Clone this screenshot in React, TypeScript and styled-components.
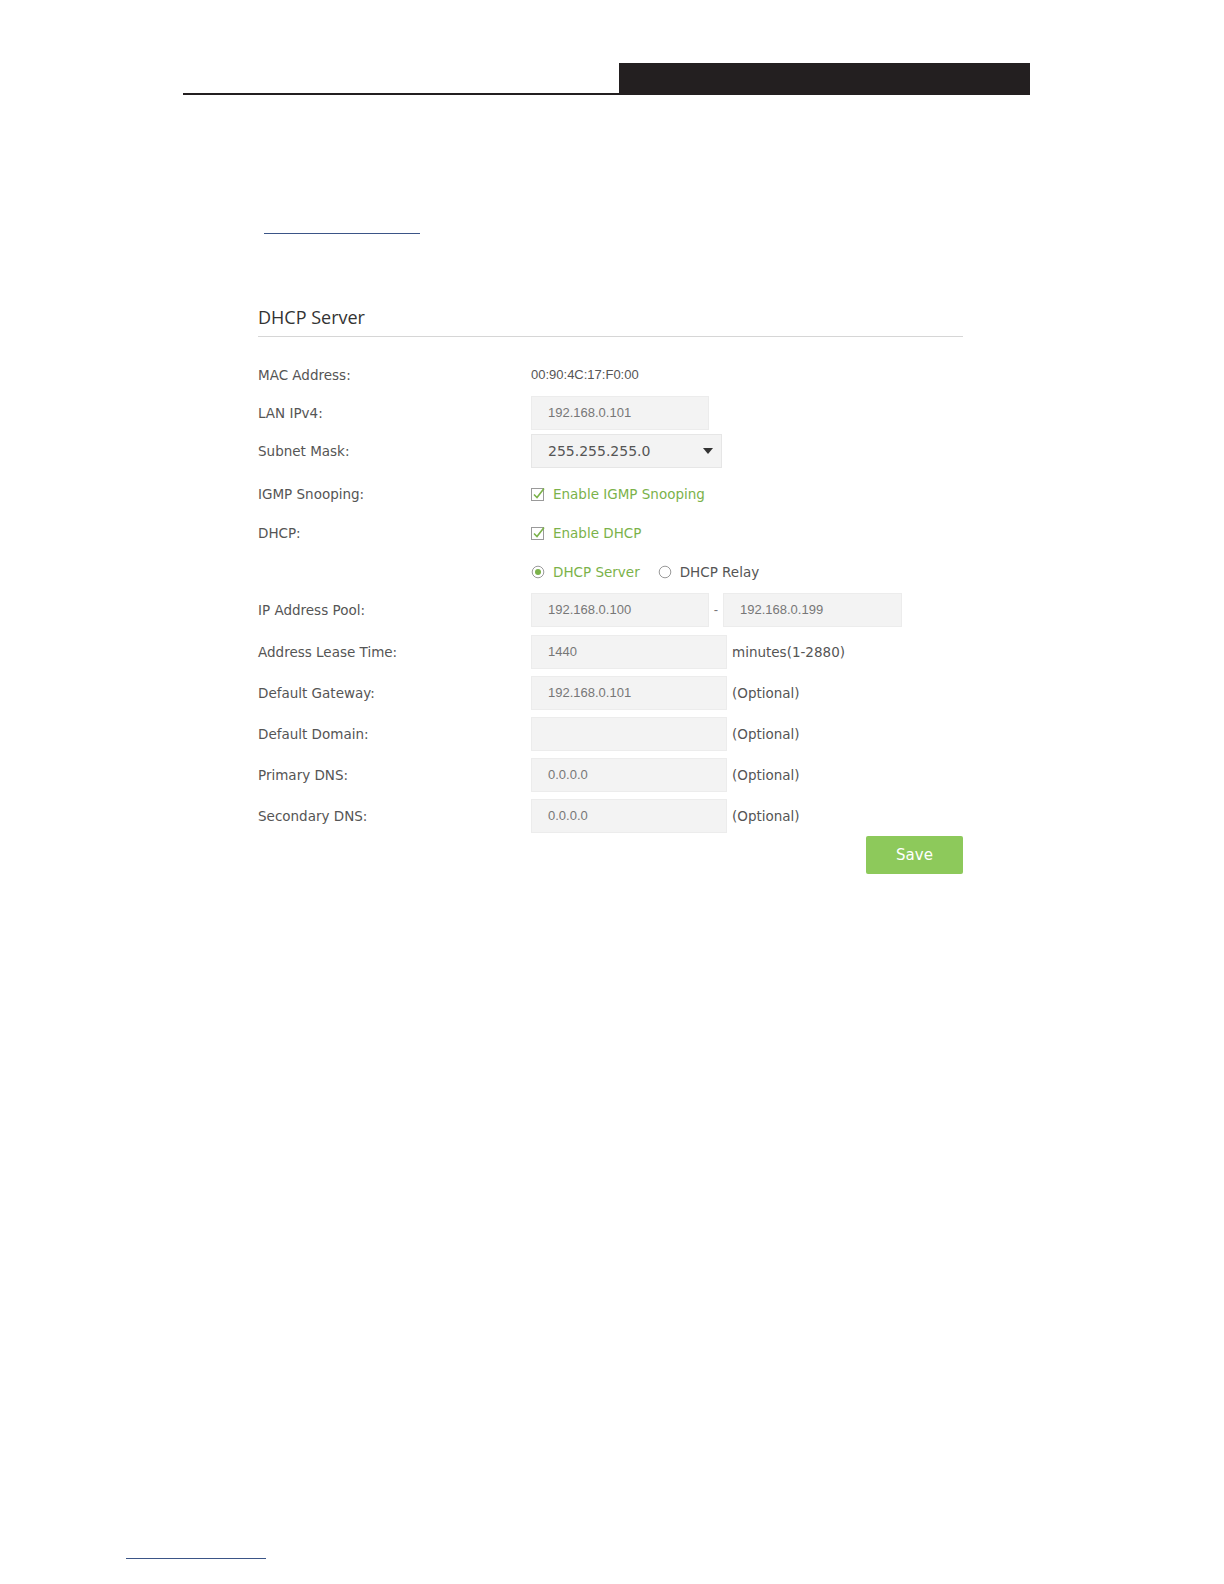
import React from "react";
import styled, { createGlobalStyle } from "styled-components";

const Global = createGlobalStyle`
  html, body { margin: 0; padding: 0; background: #ffffff; overflow: hidden; }
  body { font-family: "DejaVu Sans", Verdana, sans-serif; }
`;

const Page = styled.div`
  position: relative;
  width: 1224px;
  height: 1584px;
  background: #fff;
  overflow: hidden;
`;

const Header = styled.div`
  display: flex;
  align-items: flex-end;
  margin: 63px 0 0 183px;
  width: 847px;
`;

const HeaderRule = styled.div`
  width: 436px;
  border-bottom: 2.5px solid #231f20;
`;

const HeaderBlock = styled.div`
  width: 411px;
  height: 31.5px;
  background: #231f20;
`;

const LinkLine = styled.div`
  margin: 138px 0 0 264px;
  width: 156px;
  border-bottom: 1.5px solid #3b5587;
`;

const Panel = styled.section`
  margin: 70px 0 0 258px;
  width: 705px;
`;

const Title = styled.h2`
  margin: 0;
  font-family: "Open Sans", "DejaVu Sans", sans-serif;
  font-weight: 400;
  font-size: 18px;
  line-height: 26px;
  color: #333;
  padding-bottom: 6px;
  border-bottom: 1px solid #d6d6d6;
`;

const Form = styled.div`
  display: flex;
  flex-direction: column;
  margin-top: 21px;
`;

const Row = styled.div<{ $mt: number; $h?: number }>`
  display: grid;
  grid-template-columns: 273px 1fr;
  align-items: center;
  height: ${(p) => p.$h ?? 34}px;
  margin-top: ${(p) => p.$mt}px;
`;

const Label = styled.div`
  font-size: 13.5px;
  color: #555;
`;

const Field = styled.div`
  display: flex;
  align-items: center;
  height: 100%;
`;

const Plain = styled.span`
  font-family: "Liberation Sans", Arial, sans-serif;
  font-size: 13px;
  color: #555;
`;

const Input = styled.div<{ $w: number }>`
  box-sizing: border-box;
  width: ${(p) => p.$w}px;
  height: 34px;
  background: #f3f3f3;
  border: 1px solid #ececec;
  padding-left: 16px;
  display: flex;
  align-items: center;
  font-family: "Liberation Sans", Arial, sans-serif;
  font-size: 13px;
  color: #777;
`;

const Select = styled.div`
  box-sizing: border-box;
  width: 191px;
  height: 34px;
  background: #f3f3f3;
  border: 1px solid #e6e6e6;
  padding: 0 8px 0 16px;
  display: flex;
  align-items: center;
  justify-content: space-between;
  font-size: 14px;
  color: #555;
`;

const Arrow = styled.span`
  width: 0;
  height: 0;
  border-left: 5.5px solid transparent;
  border-right: 5.5px solid transparent;
  border-top: 6px solid #333;
`;

const Suffix = styled.span`
  margin-left: 5px;
  font-size: 13.5px;
  color: #555;
`;

const Dash = styled.span`
  width: 14px;
  text-align: center;
  font-family: "Liberation Sans", Arial, sans-serif;
  font-size: 13px;
  color: #777;
`;

const Choice = styled.label<{ $on?: boolean }>`
  display: inline-flex;
  align-items: center;
  gap: 8px;
  font-size: 13.5px;
  color: ${(p) => (p.$on ? "#7bb24a" : "#555")};
  margin-right: 18px;
`;

const SaveRow = styled.div`
  display: flex;
  justify-content: flex-end;
  margin-top: 3px;
`;

const SaveButton = styled.button`
  width: 97px;
  height: 38px;
  border: none;
  border-radius: 2px;
  background: #8dc95b;
  color: #fff;
  font-family: "DejaVu Sans", Verdana, sans-serif;
  font-size: 15px;
  cursor: pointer;
`;

const FooterLine = styled.div`
  position: absolute;
  left: 126px;
  top: 1558px;
  width: 140px;
  border-bottom: 1px solid #3b5587;
`;

const CheckIcon = () => (
  <svg width="14" height="14" viewBox="0 0 14 14">
    <rect x="0.5" y="1.5" width="12" height="12" fill="#fff" stroke="#9a9a9a" />
    <path d="M3 7.5 L6 10.5 L13 1.5" fill="none" stroke="#7bb24a" strokeWidth="1.6" />
  </svg>
);

const RadioIcon = ({ on }: { on?: boolean }) => (
  <svg width="14" height="14" viewBox="0 0 14 14">
    <circle cx="7" cy="7" r="5.8" fill="#fff" stroke="#9a9a9a" />
    {on && <circle cx="7" cy="7" r="3" fill="#7bb24a" />}
  </svg>
);

export default function App() {
  return (
    <Page>
      <Global />
      <Header>
        <HeaderRule />
        <HeaderBlock />
      </Header>
      <LinkLine />
      <Panel>
        <Title>DHCP Server</Title>
        <Form>
          <Row $mt={0}>
            <Label>MAC Address:</Label>
            <Field>
              <Plain>00:90:4C:17:F0:00</Plain>
            </Field>
          </Row>
          <Row $mt={4}>
            <Label>LAN IPv4:</Label>
            <Field>
              <Input $w={178}>192.168.0.101</Input>
            </Field>
          </Row>
          <Row $mt={4}>
            <Label>Subnet Mask:</Label>
            <Field>
              <Select>
                255.255.255.0
                <Arrow />
              </Select>
            </Field>
          </Row>
          <Row $mt={9}>
            <Label>IGMP Snooping:</Label>
            <Field>
              <Choice $on>
                <CheckIcon />
                Enable IGMP Snooping
              </Choice>
            </Field>
          </Row>
          <Row $mt={5}>
            <Label>DHCP:</Label>
            <Field>
              <Choice $on>
                <CheckIcon />
                Enable DHCP
              </Choice>
            </Field>
          </Row>
          <Row $mt={5}>
            <Label />
            <Field>
              <Choice $on>
                <RadioIcon on />
                DHCP Server
              </Choice>
              <Choice>
                <RadioIcon />
                DHCP Relay
              </Choice>
            </Field>
          </Row>
          <Row $mt={4}>
            <Label>IP Address Pool:</Label>
            <Field>
              <Input $w={178}>192.168.0.100</Input>
              <Dash>-</Dash>
              <Input $w={179}>192.168.0.199</Input>
            </Field>
          </Row>
          <Row $mt={8}>
            <Label>Address Lease Time:</Label>
            <Field>
              <Input $w={196}>1440</Input>
              <Suffix>minutes(1-2880)</Suffix>
            </Field>
          </Row>
          <Row $mt={7}>
            <Label>Default Gateway:</Label>
            <Field>
              <Input $w={196}>192.168.0.101</Input>
              <Suffix>(Optional)</Suffix>
            </Field>
          </Row>
          <Row $mt={7}>
            <Label>Default Domain:</Label>
            <Field>
              <Input $w={196} />
              <Suffix>(Optional)</Suffix>
            </Field>
          </Row>
          <Row $mt={7}>
            <Label>Primary DNS:</Label>
            <Field>
              <Input $w={196}>0.0.0.0</Input>
              <Suffix>(Optional)</Suffix>
            </Field>
          </Row>
          <Row $mt={7}>
            <Label>Secondary DNS:</Label>
            <Field>
              <Input $w={196}>0.0.0.0</Input>
              <Suffix>(Optional)</Suffix>
            </Field>
          </Row>
          <SaveRow>
            <SaveButton>Save</SaveButton>
          </SaveRow>
        </Form>
      </Panel>
      <FooterLine />
    </Page>
  );
}
